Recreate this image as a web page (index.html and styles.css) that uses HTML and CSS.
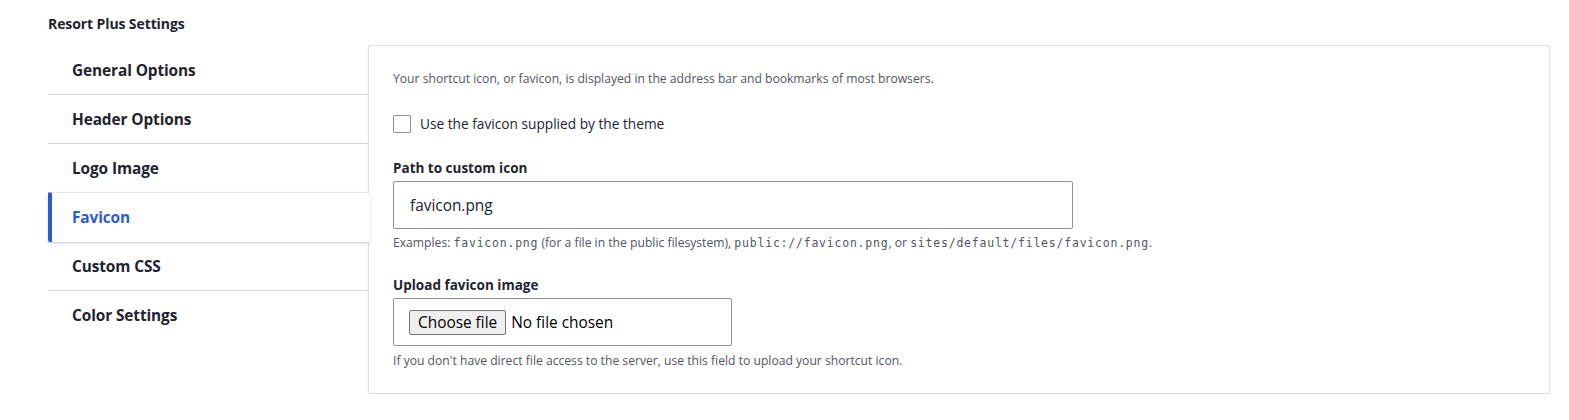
FILE: index.html
```html
<!DOCTYPE html>
<html lang="en">
<head>
<meta charset="utf-8">
<title>Resort Plus Settings</title>
<link rel="stylesheet" href="styles.css">
</head>
<body>
<div class="page">
  <h4 class="title">Resort Plus Settings</h4>
  <div class="vtabs">
    <ul class="menu">
      <li class="item"><a href="#">General Options</a></li>
      <li class="item"><a href="#">Header Options</a></li>
      <li class="item"><a href="#">Logo Image</a></li>
      <li class="item active"><a href="#">Favicon</a></li>
      <li class="item"><a href="#">Custom CSS</a></li>
      <li class="item last"><a href="#">Color Settings</a></li>
    </ul>
    <div class="pane">
      <p class="desc intro">Your shortcut icon, or favicon, is displayed in the address bar and bookmarks of most browsers.</p>
      <label class="check"><span class="box"></span><span>Use the favicon supplied by the theme</span></label>
      <div class="field">
        <div class="label">Path to custom icon</div>
        <div class="text-input">favicon.png</div>
        <p class="desc">Examples: <code>favicon.png</code> (for a file in the public filesystem), <code>public://favicon.png</code>, or <code>sites/default/files/favicon.png</code>.</p>
      </div>
      <div class="field">
        <div class="label">Upload favicon image</div>
        <div class="file-input"><span class="file-btn">Choose file</span><span class="file-name">No file chosen</span></div>
        <p class="desc">If you don't have direct file access to the server, use this field to upload your shortcut icon.</p>
      </div>
    </div>
  </div>
</div>
</body>
</html>
```

FILE: styles.css
```css
* { box-sizing: border-box; }
html, body { margin: 0; padding: 0; background: #fff; }
body {
  font-family: "Open Sans", "Noto Sans", sans-serif;
  color: #222330;
}
.page { padding: 15px 19px 0 48px; }
.title {
  margin: 0;
  font-size: 14px;
  font-weight: 700;
  line-height: 18px;
  letter-spacing: -0.1px;
}
.vtabs {
  display: flex;
  margin-top: 12px;
}
.menu {
  list-style: none;
  margin: 1px 0 0 0;
  padding: 0;
  width: 320px;
  flex: none;
  position: relative;
  z-index: 1;
}
.item {
  height: 49px;
  border-bottom: 1px solid #d3d4d9;
  display: flex;
  align-items: center;
  padding-left: 24px;
}
.item.last { border-bottom: none; height: 48px; }
.item a {
  color: #222330;
  text-decoration: none;
  font-weight: 700;
  font-size: 15.4px;
  letter-spacing: -0.1px;
}
.item.active {
  margin-right: -2px;
  background: #fff;
  border-left: 4px solid #2b5cd6;
  border-radius: 2px 0 0 2px;
  padding-left: 20px;
  height: 50px;
  margin-top: -1px;
  border-bottom: none;
  border-top: 1px solid #e4e5e9;
  box-shadow: 0 2px 4px rgba(0, 0, 0, 0.1);
}
.item.active + .item { border-top: 1px solid #d3d4d9; height: 49px; }
.item.active a { color: #2b5cd6; }
.pane {
  flex: 1;
  height: 349px;
  border: 1px solid #dedfe4;
  border-radius: 2px;
  box-shadow: 0 2px 3px rgba(0, 0, 0, 0.07);
  padding: 24px 24px 0 24px;
  background: #fff;
}
.desc {
  margin: 0;
  font-size: 12.15px;
  line-height: 18px;
  color: #545560;
}
.intro { margin-top: 0; }
code {
  font-family: "DejaVu Sans Mono", monospace;
  font-size: 11.5px;
  letter-spacing: 0.78px;
  color: #545560;
}
.check {
  display: flex;
  align-items: center;
  margin-top: 26px;
  font-size: 13.7px;
  color: #222330;
}
.box {
  width: 18px;
  height: 18px;
  border: 1px solid #8e929c;
  border-radius: 2px;
  margin-right: 9px;
  background: #fff;
}
.field { margin-top: 26px; }
.field + .field { margin-top: 24px; }
.label {
  font-size: 13.5px;
  font-weight: 700;
  line-height: 18px;
  margin-bottom: 4px;
}
.text-input {
  width: 680px;
  height: 48px;
  border: 1px solid #8e929c;
  border-radius: 2px;
  padding: 0 16px;
  display: flex;
  align-items: center;
  font-size: 15.4px;
  color: #222330;
  margin-bottom: 5px;
}
.file-input {
  width: 339px;
  height: 48px;
  border: 1px solid #8e929c;
  border-radius: 2px;
  padding: 0 15px;
  display: flex;
  align-items: center;
  font-size: 15.4px;
  color: #222330;
  margin-bottom: 6px;
}
.file-btn {
  height: 25px;
  padding: 0 8px;
  display: flex;
  align-items: center;
  background: #efefef;
  border: 1px solid #767676;
  border-radius: 2px;
  margin-right: 5px;
  color: #000;
}
.file-name { color: #000; }
```
